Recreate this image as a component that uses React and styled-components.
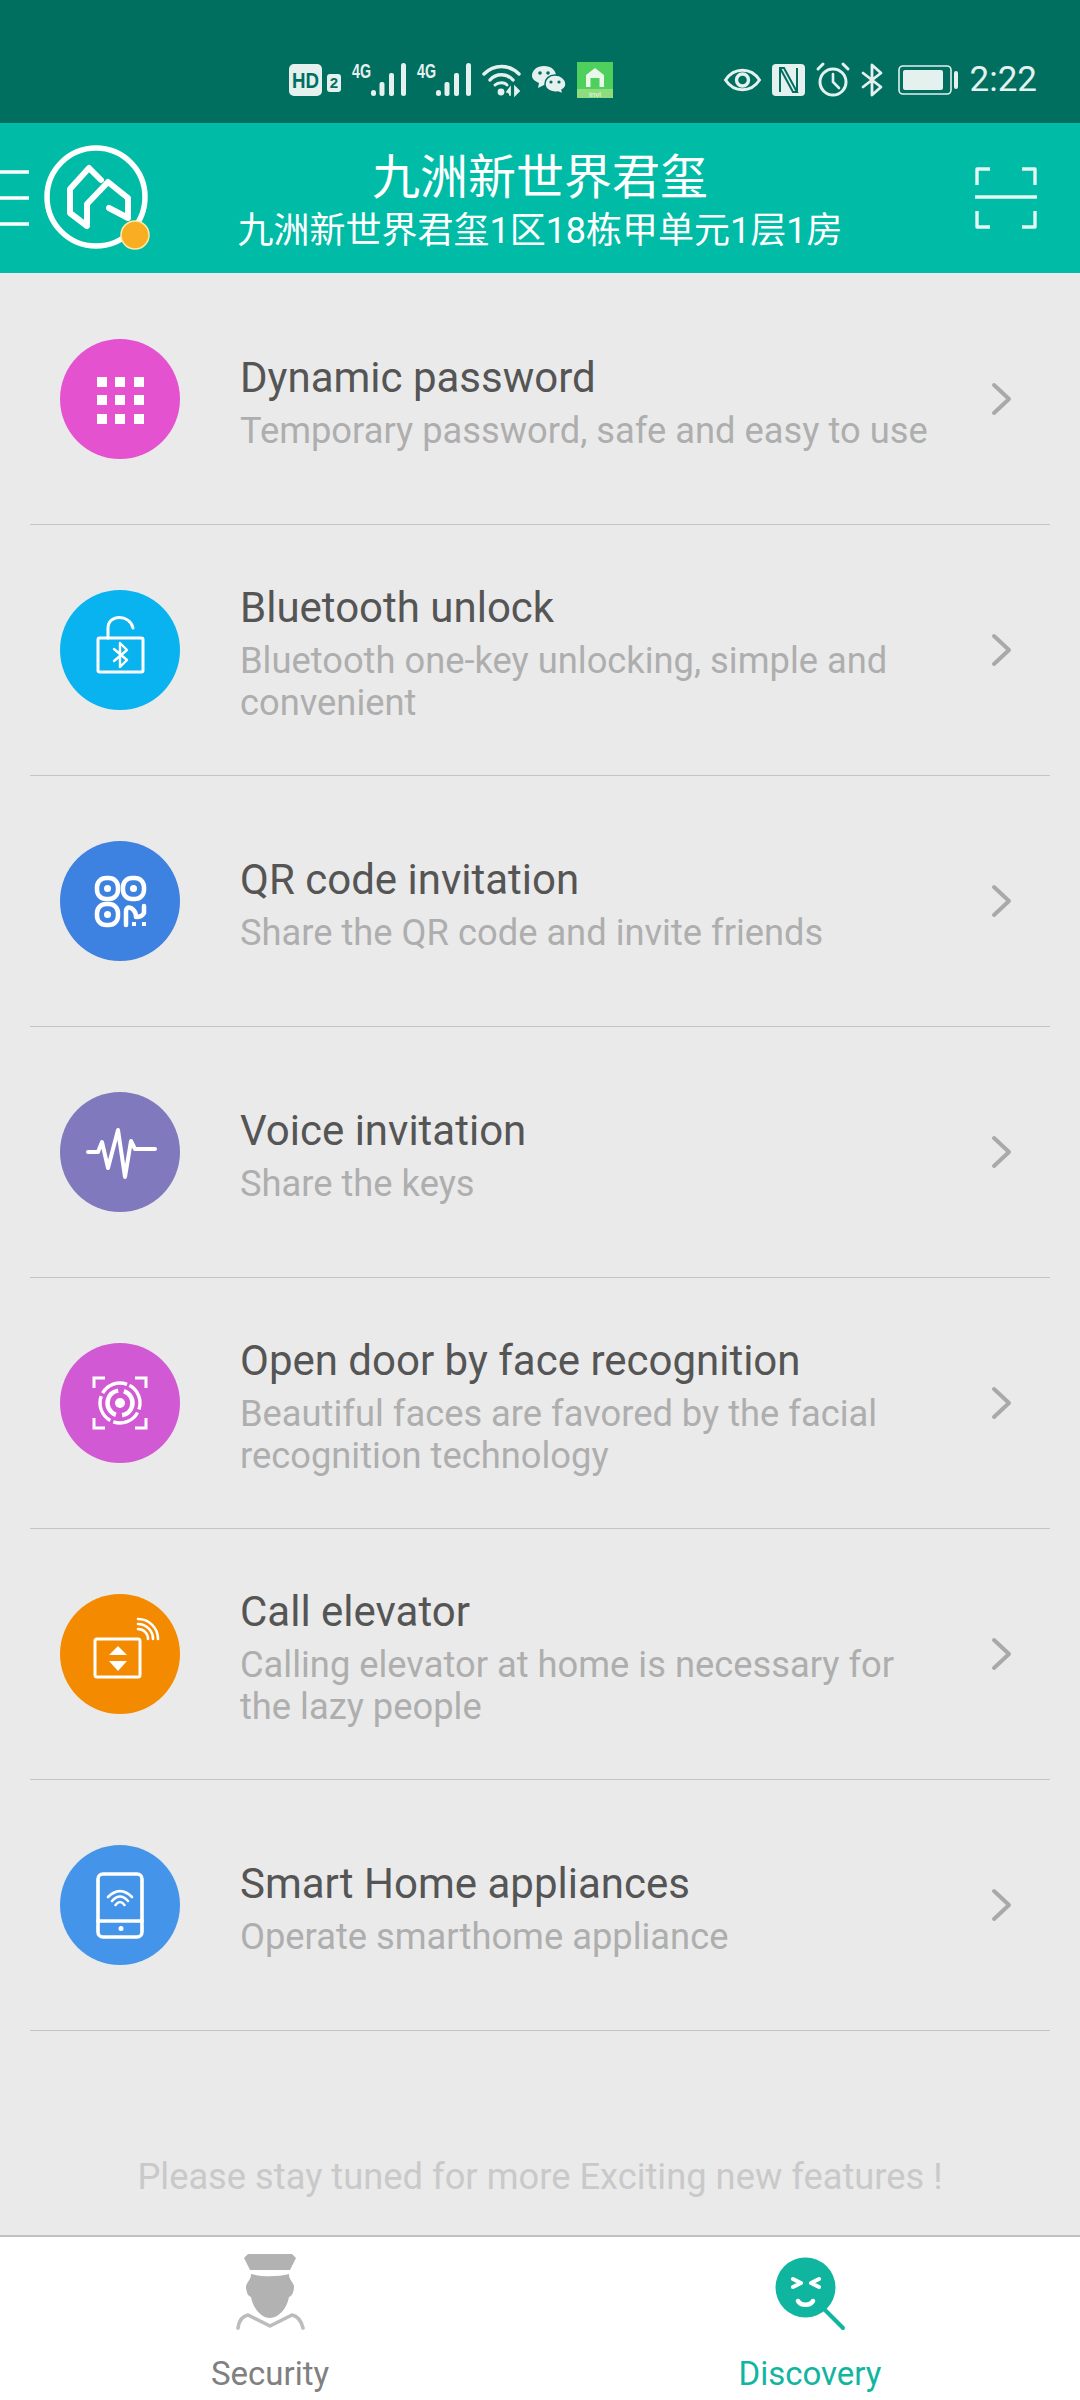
import styled, { createGlobalStyle } from "styled-components";

const GlobalStyle = createGlobalStyle`
  html, body {
    margin: 0;
    padding: 0;
    background: #eaeaea;
  }
  * {
    box-sizing: border-box;
  }
`;

const Page = styled.div`
  width: 1080px;
  height: 2400px;
  display: flex;
  flex-direction: column;
  overflow: hidden;
  background: #eaeaea;
  font-family: Roboto, "Noto Sans CJK SC", sans-serif;
`;

const StatusBar = styled.div`
  height: 123px;
  flex: none;
  padding: 37px 43px 0 289px;
  display: flex;
  align-items: center;
  justify-content: space-between;
  background: #006f60;
  color: #e4f1ee;
`;

const StatusGroup = styled.div`
  display: flex;
  align-items: center;
  gap: ${(p) => p.$gap}px;
`;

const Clock = styled.span`
  font-size: 35px;
  line-height: 40px;
  margin-left: 1px;
`;

const Header = styled.header`
  height: 150px;
  flex: none;
  display: grid;
  grid-template-columns: 1fr auto 1fr;
  align-items: center;
  background: #00bca6;
  color: #fff;
`;

const HeaderSide = styled.div`
  display: flex;
  justify-content: ${(p) => p.$end ? "flex-end" : "flex-start"};
  padding-right: ${(p) => p.$end ? 43 : 0}px;
`;

const HeaderCenter = styled.div`
  display: flex;
  flex-direction: column;
  align-items: center;
`;

const HeaderTitle = styled.div`
  font-size: 48px;
  line-height: 60px;
  font-family: "Noto Sans CJK SC", sans-serif;
  font-weight: 400;
  margin-bottom: 5px;
`;

const HeaderAddress = styled.div`
  font-size: 36px;
  line-height: 46px;
  font-weight: 400;
  white-space: nowrap;
`;

const MenuList = styled.main`
  display: flex;
  flex-direction: column;
  flex: none;
  padding-top: 1px;
`;

const Row = styled.div`
  height: 251px;
  margin: 0 30px;
  padding: 0 38px 0 30px;
  display: flex;
  align-items: center;
  border-bottom: 1.5px solid #c4c4c4;
`;

const IconDisc = styled.div`
  width: 120px;
  height: 120px;
  flex: none;
  border-radius: 50%;
  background: ${(p) => p.$color};
  color: #fff;
`;

const RowText = styled.div`
  flex: 1;
  margin-left: 60px;
  padding: 6px 20px 0 0;
`;

const RowTitle = styled.div`
  font-size: 42px;
  line-height: 52px;
  color: #555;
  margin-bottom: 6px;
`;

const RowHint = styled.div`
  font-size: 36.3px;
  line-height: 42px;
  color: #aeaeae;
  max-width: 700px;
`;

const Tip = styled.div`
  flex: 1;
  padding-top: 124px;
  text-align: center;
  font-size: 36.3px;
  line-height: 44px;
  color: #c9c9c9;
`;

const TabBar = styled.nav`
  height: 165px;
  flex: none;
  display: grid;
  grid-template-columns: 1fr 1fr;
  background: #fff;
  border-top: 2px solid #c0c0c0;
`;

const Tab = styled.div`
  display: flex;
  flex-direction: column;
  align-items: center;
  padding-top: 15px;
  color: ${(p) => (p.$active ? "#12b5a0" : "#808080")};
`;

const TabLabel = styled.span`
  font-size: 33px;
  line-height: 42px;
  margin-top: 21px;
`;

const Svg = styled.svg`
  display: block;
  flex: none;
  overflow: visible;
`;

const Disc = ({ children }) => (
  <Svg width="120" height="120" viewBox="0 0 120 120" fill="none" stroke="#fff" strokeLinecap="round" strokeLinejoin="round">
    {children}
  </Svg>
);

const KeypadIcon = () => (
  <Disc>
    <g fill="#fff" stroke="none">
      {[37, 55, 74].flatMap((x) =>
        [38, 56, 75].map((y) => <rect key={`${x}-${y}`} x={x} y={y} width="10" height="10" />)
      )}
    </g>
  </Disc>
);

const BluetoothLockIcon = () => (
  <Disc>
    <g strokeWidth="3">
      <rect x="38" y="48" width="45" height="34" rx="1.5" />
      <path d="M48 48 V38 C48 24 70 24 73 38" />
      <path d="M54 59 L67 70 L60 77 V53 L67 60 L54 71" strokeWidth="2.4" />
    </g>
  </Disc>
);

const QrIcon = () => (
  <Disc>
    <g strokeWidth="4.5">
      <rect x="37" y="37" width="21" height="21" rx="9" />
      <rect x="63" y="37" width="21" height="21" rx="9" />
      <rect x="37" y="63" width="21" height="21" rx="9" />
      <path d="M66 84 V71 Q66 65 71 67 Q76 70 76 76 Q82 76 84 72 V65" />
    </g>
    <g fill="#fff" stroke="none">
      <circle cx="47.5" cy="47.5" r="3.5" />
      <circle cx="73.5" cy="47.5" r="3.5" />
      <circle cx="47.5" cy="73.5" r="3.5" />
      <rect x="72" y="81" width="4" height="4" />
      <rect x="82" y="81" width="4" height="4" />
    </g>
  </Disc>
);

const VoiceIcon = () => (
  <Disc>
    <path d="M28 60 H38 L42 50 L48 76 L58 38 L65 85 L71 49 L75 57 H95" strokeWidth="4" />
  </Disc>
);

const FaceIcon = () => (
  <Disc>
    <g strokeWidth="3" strokeLinecap="butt" strokeLinejoin="miter">
      <path d="M34 45 V35 H45 M75 35 H86 V45 M34 75 V85 H45 M75 85 H86 V75" />
      <circle cx="60" cy="60" r="20" strokeDasharray="28 3.4" strokeWidth="3.4" transform="rotate(-62 60 60)" />
      <circle cx="60" cy="60" r="12.5" strokeDasharray="33 6.3" strokeWidth="4.5" transform="rotate(-72 60 60)" />
    </g>
    <circle cx="60" cy="60" r="5" fill="#fff" stroke="none" />
  </Disc>
);

const ElevatorIcon = () => (
  <Disc>
    <rect x="35" y="45" width="45" height="38" rx="2" strokeWidth="3" />
    <path d="M58 52 L67 61 H49 Z M49 67 H67 L58 77 Z" fill="#fff" stroke="none" />
    <path d="M78 35 A10 10 0 0 1 88 45 M78 30 A15 15 0 0 1 93 45 M78 25 A20 20 0 0 1 98 45" strokeWidth="2.6" />
  </Disc>
);

const PhoneIcon = () => (
  <Disc>
    <g strokeWidth="3.6">
      <rect x="38" y="29" width="44" height="63" rx="5" />
      <path d="M38 76 H82" />
      <g strokeWidth="2.6">
        <path d="M48 52 Q60 40 72 52" />
        <path d="M52 56 Q60 47 68 56" />
        <path d="M55.5 60 Q60 54 64.5 60" />
      </g>
    </g>
    <circle cx="61" cy="83.5" r="2.5" fill="#fff" stroke="none" />
  </Disc>
);

const Chevron = () => (
  <Svg width="20" height="32" viewBox="0 0 20 32" fill="none">
    <path d="M2 2 L17 16 L2 30" stroke="#a9a9a9" strokeWidth="4" strokeLinecap="round" strokeLinejoin="round" />
  </Svg>
);

const HdIcon = () => (
  <Svg width="52" height="34" viewBox="0 0 52 34">
    <rect x="0" y="1" width="33" height="32" rx="5" fill="currentColor" />
    <text x="16.5" y="25" textAnchor="middle" fontFamily="Liberation Sans" fontWeight="700" fontSize="22" textLength="27" lengthAdjust="spacingAndGlyphs" fill="#006f60">HD</text>
    <rect x="38" y="11" width="14" height="18" rx="3" fill="currentColor" />
    <text x="45" y="25" textAnchor="middle" fontFamily="Liberation Sans" fontWeight="700" fontSize="15" fill="#006f60">2</text>
  </Svg>
);

const SignalIcon = () => (
  <Svg width="54" height="34" viewBox="0 0 54 34" fill="currentColor">
    <text x="0" y="15" fontFamily="Liberation Sans" fontWeight="700" fontSize="20" textLength="19" lengthAdjust="spacingAndGlyphs">4G</text>
    <rect x="19" y="27" width="5" height="6" rx="2.5" />
    <rect x="27.5" y="19" width="5" height="14" rx="2" />
    <rect x="37" y="10" width="5" height="23" rx="2" />
    <rect x="49" y="0" width="5" height="33" rx="2.5" />
  </Svg>
);

const WifiIcon = () => (
  <Svg width="39" height="34" viewBox="0 0 39 34" fill="none" stroke="currentColor" strokeLinecap="round">
    <path d="M2 11 C12 1 27 1 37 11" strokeWidth="3.4" />
    <path d="M8 17 C14 10 25 10 31 17" strokeWidth="3.4" />
    <path d="M13 22 C16 19 23 19 25 22" strokeWidth="3" />
    <circle cx="19" cy="29" r="3.4" fill="currentColor" stroke="none" />
    <path d="M28 32 V25 L25 29 M33 24 V32 L37 28 Z" strokeWidth="1.8" fill="currentColor" />
  </Svg>
);

const WeChatIcon = () => (
  <Svg width="34" height="28" viewBox="0 0 34 28">
    <path d="M12 0 C19 0 24 4 24 10 C24 15 19 19 12 19 L6 22 L7 17 C3 15 0 13 0 10 C0 4 5 0 12 0 Z" fill="currentColor" />
    <path d="M23 9 C29 9 34 13 34 18 C34 21 32 23 30 24 L31 28 L26 26 C20 27 13 24 13 18 C13 13 17 9 23 9 Z" fill="currentColor" stroke="#006f60" strokeWidth="1.5" />
    <g fill="#006f60">
      <circle cx="8" cy="7" r="1.8" />
      <circle cx="16" cy="7" r="1.8" />
      <circle cx="19" cy="16" r="1.6" />
      <circle cx="27" cy="16" r="1.6" />
    </g>
  </Svg>
);

const AppBadgeIcon = () => (
  <Svg width="36" height="36" viewBox="0 0 36 36">
    <rect width="36" height="36" fill="#4fcf5c" />
    <rect y="27" width="36" height="9" fill="#8fdc7e" />
    <path d="M18 6 L27 13 V25 H22.5 V16 H13.5 V25 H9 V13 Z" fill="#e8f8ea" />
    <text x="18" y="35" textAnchor="middle" fontFamily="Liberation Sans" fontSize="8" fill="#e8f8ea">invi</text>
  </Svg>
);

const EyeIcon = () => (
  <Svg width="37" height="24" viewBox="0 0 37 24" fill="none" stroke="currentColor">
    <path d="M1.5 12 C10 -1 27 -1 35.5 12 C27 25 10 25 1.5 12 Z" strokeWidth="3" />
    <circle cx="18.5" cy="12" r="6" strokeWidth="3.4" />
  </Svg>
);

const NfcIcon = () => (
  <Svg width="33" height="32" viewBox="0 0 33 32">
    <rect width="33" height="32" rx="4" fill="currentColor" />
    <path d="M8 28 V4 H12 L25 28 H21 L8 4 M25 4 V28" fill="none" stroke="#006f60" strokeWidth="2" />
  </Svg>
);

const AlarmIcon = () => (
  <Svg width="34" height="34" viewBox="0 0 34 34" fill="none" stroke="currentColor" strokeLinecap="round">
    <circle cx="17" cy="19" r="13" strokeWidth="3" />
    <path d="M17 11 V19 L23 25" strokeWidth="2.6" />
    <path d="M2 6 L7 1 M27 1 L32 6" strokeWidth="3" />
  </Svg>
);

const BluetoothIcon = () => (
  <Svg width="22" height="32" viewBox="0 0 22 32" fill="none" stroke="currentColor" strokeWidth="2.8" strokeLinecap="round" strokeLinejoin="round">
    <path d="M2 9 L20 23 L11 31 V1 L20 9 L2 23" />
  </Svg>
);

const BatteryIcon = () => (
  <Svg width="64" height="30" viewBox="-4 0 64 30" fill="none">
    <rect x="1" y="1" width="52" height="28" rx="4" stroke="currentColor" strokeWidth="1.6" />
    <rect x="5" y="5" width="40" height="20" rx="2" fill="currentColor" />
    <rect x="56" y="6" width="4" height="18" rx="2" fill="currentColor" />
  </Svg>
);

const LogoIcon = () => (
  <Svg width="160" height="120" viewBox="0 0 160 120" fill="none" stroke="#fff" strokeLinejoin="round">
    {/* hamburger runs off the left edge */}
    <path d="M0 34 H29 M0 60 H29 M0 86 H29" strokeWidth="3.5" />
    <circle cx="96" cy="59" r="49" strokeWidth="5.5" />
    <path d="M101 42 L89 30 L70 51 V75 L87 88 V66 L108 44 L128 60 V80 L109 70" strokeWidth="6" strokeLinecap="round" />
    <circle cx="135" cy="97" r="14" fill="#f9ae22" stroke="#ffe9a8" strokeWidth="1.5" />
  </Svg>
);

const ScanIcon = () => (
  <Svg width="62" height="62" viewBox="0 0 62 62" fill="none" stroke="#e4f6f3" strokeWidth="3.4" strokeLinejoin="round">
    <path d="M2 18 V2 H15 M47 2 H60 V18 M0 30 H62 M2 44 V60 H15 M47 60 H60 V44" />
  </Svg>
);

const GuardIcon = () => (
  <Svg width="80" height="80" viewBox="0 0 80 80">
    <g fill="#b2b2b2">
      <path d="M14 6 L18 2 H62 L66 6 L60 18 H20 Z" />
      <path d="M21 22 C32 25 48 25 59 22 C59 28 62 28 64 34 C64 40 62 44 59 45 C57 57 48 66 40 66 C32 66 23 57 21 45 C18 44 16 40 16 34 C18 28 21 28 21 22 Z" />
    </g>
    <path d="M8 76 C9 68 13 64 18 63 L40 74 L62 63 C67 64 71 68 73 76" fill="none" stroke="#bcbcbc" strokeWidth="3.6" strokeLinecap="round" strokeLinejoin="round" />
  </Svg>
);

const SearchFaceIcon = () => (
  <Svg width="80" height="80" viewBox="0 0 80 80" fill="none">
    <circle cx="35.5" cy="35.5" r="30" fill="#10b59f" />
    <path d="M55 58 L73 76" stroke="#10b59f" strokeWidth="4" strokeLinecap="round" />
    <g stroke="#fff" strokeWidth="4" strokeLinecap="round" strokeLinejoin="round">
      <path d="M23 27 L31 31 L23 35" />
      <path d="M49 27 L41 31 L49 35" />
      <path d="M28 49 C31 54 40 54 43 49" strokeWidth="4.5" />
    </g>
  </Svg>
);

const features = [
  { color: "#e552cf", Icon: KeypadIcon, title: "Dynamic password", hint: "Temporary password, safe and easy to use" },
  { color: "#08b3ef", Icon: BluetoothLockIcon, title: "Bluetooth unlock", hint: "Bluetooth one-key unlocking, simple and convenient" },
  { color: "#3d82e0", Icon: QrIcon, title: "QR code invitation", hint: "Share the QR code and invite friends" },
  { color: "#8079be", Icon: VoiceIcon, title: "Voice invitation", hint: "Share the keys" },
  { color: "#d15ad4", Icon: FaceIcon, title: "Open door by face recognition", hint: "Beautiful faces are favored by the facial recognition technology" },
  { color: "#f48a00", Icon: ElevatorIcon, title: "Call elevator", hint: "Calling elevator at home is necessary for the lazy people" },
  { color: "#4495ea", Icon: PhoneIcon, title: "Smart Home appliances", hint: "Operate smarthome appliance" },
];

const App = () => {
  return (
    <Page>
      <GlobalStyle />
      <StatusBar>
        <StatusGroup $gap={11}>
          <HdIcon />
          <SignalIcon />
          <SignalIcon />
          <WifiIcon />
          <WeChatIcon />
          <AppBadgeIcon />
        </StatusGroup>
        <StatusGroup $gap={11}>
          <EyeIcon />
          <NfcIcon />
          <AlarmIcon />
          <BluetoothIcon />
          <BatteryIcon />
          <Clock>2:22</Clock>
        </StatusGroup>
      </StatusBar>

      <Header>
        <HeaderSide>
          <LogoIcon />
        </HeaderSide>
        <HeaderCenter>
          <HeaderTitle>九洲新世界君玺</HeaderTitle>
          <HeaderAddress>九洲新世界君玺1区18栋甲单元1层1房</HeaderAddress>
        </HeaderCenter>
        <HeaderSide $end>
          <ScanIcon />
        </HeaderSide>
      </Header>

      <MenuList>
        {features.map(({ color, Icon, title, hint }) => (
          <Row key={title}>
            <IconDisc $color={color}>
              <Icon />
            </IconDisc>
            <RowText>
              <RowTitle>{title}</RowTitle>
              <RowHint>{hint}</RowHint>
            </RowText>
            <Chevron />
          </Row>
        ))}
      </MenuList>

      <Tip>Please stay tuned for more Exciting new features !</Tip>

      <TabBar>
        <Tab>
          <GuardIcon />
          <TabLabel>Security</TabLabel>
        </Tab>
        <Tab $active>
          <SearchFaceIcon />
          <TabLabel>Discovery</TabLabel>
        </Tab>
      </TabBar>
    </Page>
  );
};

export default App;
